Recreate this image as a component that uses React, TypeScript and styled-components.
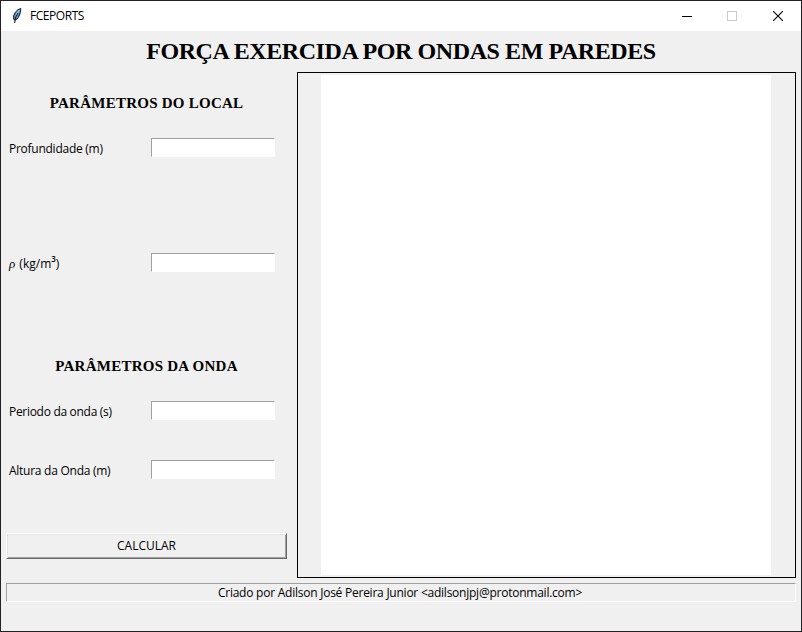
import React from "react";
import styled, { createGlobalStyle } from "styled-components";

const GlobalStyle = createGlobalStyle`
  * { box-sizing: border-box; }
  body { margin: 0; background: #f0f0f0; }
`;

const Window = styled.div`
  width: 802px;
  height: 632px;
  display: flex;
  flex-direction: column;
  border: 1px solid #232125;
  background: #f0f0f0;
  color: #000;
  font: 12px/16px "Open Sans", "Noto Sans", sans-serif;
  overflow: hidden;
`;

const TitleBar = styled.header`
  height: 30px;
  flex: none;
  display: flex;
  align-items: center;
  background: #fff;
  padding-left: 10px;
`;

const Caption = styled.span`
  flex: 1;
  padding-left: 7px;
  letter-spacing: -0.45px;
`;

const WindowControl = styled.span`
  width: 46px;
  height: 30px;
  display: flex;
  align-items: center;
  justify-content: center;
`;

const MinimizeControl = styled(WindowControl)`
  padding-left: 2px;
`;

const Title = styled.h1`
  margin: 0;
  height: 41px;
  flex: none;
  text-align: center;
  font: bold 24px/41px "Liberation Serif", serif;
  letter-spacing: -0.42px;
  white-space: nowrap;
`;

const Body = styled.main`
  display: flex;
  height: 506px;
  flex: none;
`;

const Form = styled.form`
  width: 296px;
  display: flex;
  flex-direction: column;
  padding: 0 10px 0 5px;
`;

const SectionTitle = styled.h2<{ $top: number }>`
  margin: ${(p) => p.$top}px 0 0;
  text-align: center;
  font: bold 15px/18px "Liberation Serif", serif;
  letter-spacing: 0.25px;
  white-space: nowrap;
`;

const Field = styled.label<{ $top: number }>`
  display: flex;
  height: 19px;
  margin-top: ${(p) => p.$top}px;
  padding-left: 3px;
`;

const FieldLabel = styled.span<{ $spacing: number }>`
  width: 142px;
  line-height: 22px;
  letter-spacing: ${(p) => p.$spacing}px;
  white-space: nowrap;
`;

const Rho = styled.i`
  margin-right: 1px;
  font: italic 13px/12px "Liberation Serif", serif;
`;

const Cube = styled.sup`
  font-size: 8px;
  font-weight: 600;
  line-height: 0;
  vertical-align: 6px;
`;

const Entry = styled.input`
  width: 124px;
  height: 19px;
  padding: 0 2px;
  border: 1px solid;
  border-color: #a0a0a0 #fff #fff #a0a0a0;
  border-radius: 0;
  background: #fff;
  outline: none;
`;

const CalcButton = styled.button`
  width: 281px;
  height: 26px;
  margin-top: 54px;
  padding: 0;
  border: 1px solid;
  border-color: #fff #696969 #696969 #fff;
  border-radius: 0;
  box-shadow: inset 1px 1px #e3e3e3, inset -1px -1px #a0a0a0;
  background: #f0f0f0;
  color: #000;
  font: 12px/22px "Open Sans", "Noto Sans", sans-serif;
  letter-spacing: 0;
`;

const PlotFrame = styled.section`
  width: 499px;
  height: 506px;
  border: 1px solid #000;
  padding: 2px 24px 2px 23px;
`;

const Canvas = styled.div`
  width: 450px;
  height: 500px;
  background: #fff;
`;

const StatusBar = styled.footer`
  height: 19px;
  margin: 5px 5px 0;
  padding-right: 2px;
  border: 1px solid;
  border-color: #a0a0a0 #fff #fff #a0a0a0;
  text-align: center;
  line-height: 17px;
  letter-spacing: -0.24px;
`;

const Feather = () => (
  <svg width="12" height="16" viewBox="0 0 12 16">
    <path d="M9.8.5 7 1.6 4.2 4.4 2.5 8l.2 3.3 1 1 2.4-1.2 2-3 1.3-3.6z" fill="#4f86c6" stroke="#18202c" strokeWidth="1" />
    <path d="M8.7 2 6 5.4 4.8 9" fill="none" stroke="#a9cdf2" strokeWidth="1.2" />
    <path d="M7 5 4.5 9.5 3.7 15" fill="none" stroke="#111" strokeWidth="1" />
  </svg>
);

export default function App() {
  return (
    <>
      <GlobalStyle />
      <Window>
        <TitleBar>
          <Feather />
          <Caption>FCEPORTS</Caption>
          <MinimizeControl>
            <svg width="10" height="10" shapeRendering="crispEdges"><path d="M0 5.5h10" stroke="#000" /></svg>
          </MinimizeControl>
          <WindowControl>
            <svg width="10" height="10" shapeRendering="crispEdges"><path d="M.5.5h9v9h-9z" fill="none" stroke="#ccc" /></svg>
          </WindowControl>
          <WindowControl>
            <svg width="10" height="10"><path d="M0 0l10 10M10 0 0 10" stroke="#000" strokeWidth="1.1" /></svg>
          </WindowControl>
        </TitleBar>
        <Title>FORÇA EXERCIDA POR ONDAS EM PAREDES</Title>
        <Body>
          <Form onSubmit={(e) => e.preventDefault()}>
            <SectionTitle $top={22}>PARÂMETROS DO LOCAL</SectionTitle>
            <Field $top={26}>
              <FieldLabel $spacing={-0.26}>Profundidade (m)</FieldLabel>
              <Entry />
            </Field>
            <Field $top={96}>
              <FieldLabel $spacing={0}>
                <Rho>ρ</Rho> (kg/m<Cube>3</Cube>)
              </FieldLabel>
              <Entry />
            </Field>
            <SectionTitle $top={85}>PARÂMETROS DA ONDA</SectionTitle>
            <Field $top={26}>
              <FieldLabel $spacing={-0.3}>Periodo da onda (s)</FieldLabel>
              <Entry />
            </Field>
            <Field $top={40}>
              <FieldLabel $spacing={-0.26}>Altura da Onda (m)</FieldLabel>
              <Entry />
            </Field>
            <CalcButton type="submit">CALCULAR</CalcButton>
          </Form>
          <PlotFrame>
            <Canvas />
          </PlotFrame>
        </Body>
        <StatusBar>Criado por Adilson José Pereira Junior &lt;adilsonjpj@protonmail.com&gt;</StatusBar>
      </Window>
    </>
  );
}
